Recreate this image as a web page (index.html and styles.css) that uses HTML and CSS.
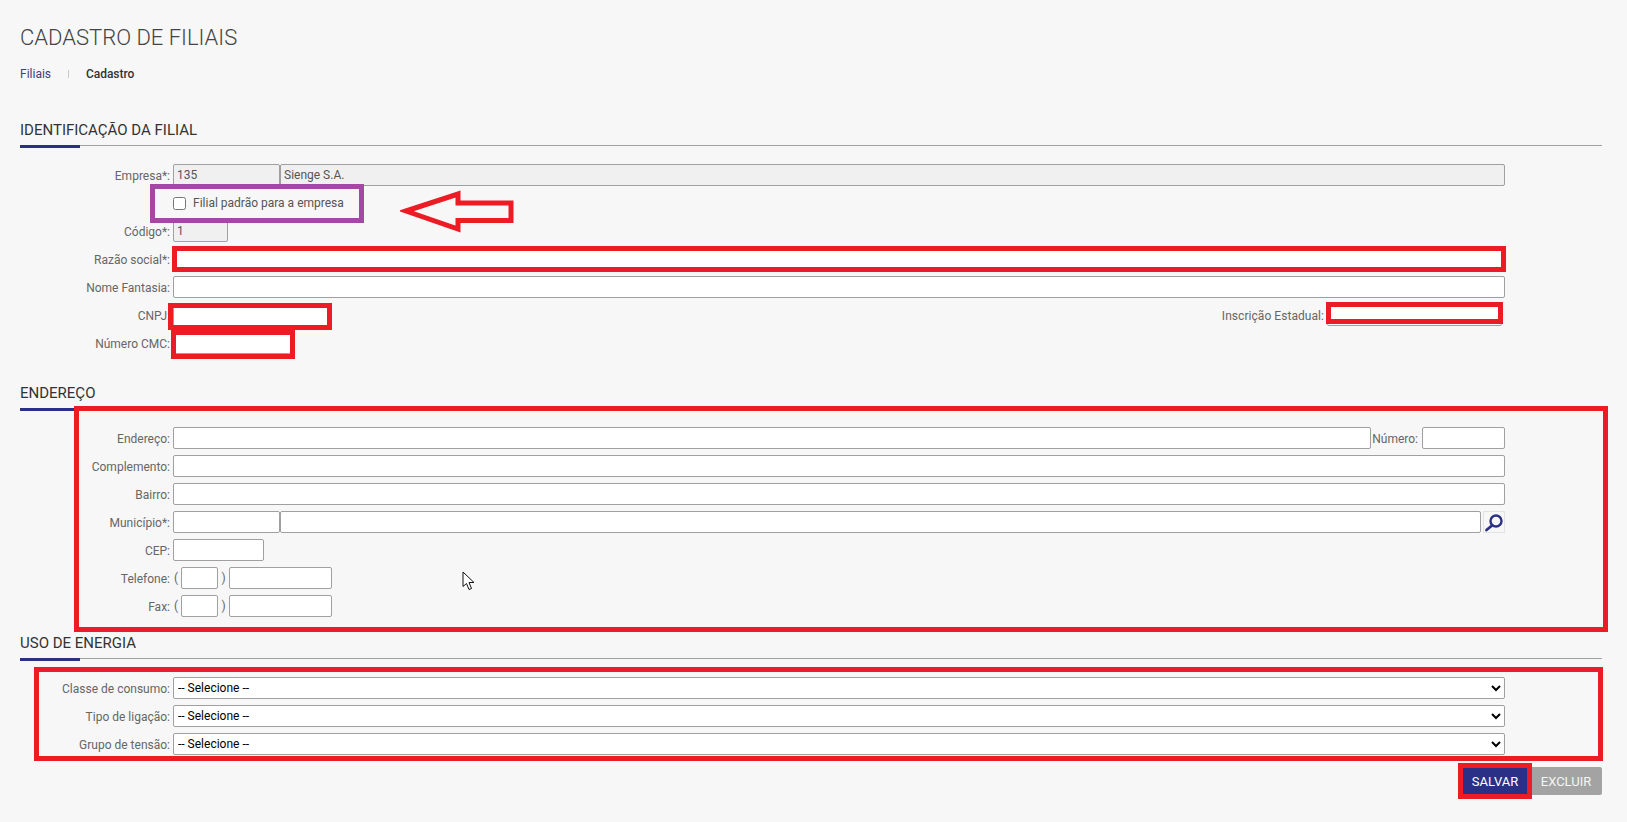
FILE: index.html
```html
<!DOCTYPE html>
<html lang="pt-BR">
<head>
    <meta charset="UTF-8">
    <title>Cadastro de Filiais</title>
    <link rel="stylesheet" href="styles.css">
</head>
<body>

    <div class="page">
        <h1>CADASTRO DE FILIAIS</h1>
        <div class="breadcrumb">
            <a class="crumb-link">Filiais</a>
            <span class="crumb-sep"></span>
            <span class="crumb-current">Cadastro</span>
        </div>

        <!-- Identificacao -->
        <h2 class="section-title first">IDENTIFICAÇÃO DA FILIAL</h2>
        <div class="rows">
            <div class="row">
                <label>Empresa*:</label>
                <input type="text" class="w-code locked" value="135" disabled>
                <input type="text" class="grow locked" value="Sienge S.A." disabled>
            </div>
            <div class="row">
                <label></label>
                <input type="checkbox" class="check">
                <span class="check-text">Filial padrão para a empresa</span>
            </div>
            <div class="row">
                <label>Código*:</label>
                <input type="text" class="w-short locked" value="1" disabled>
            </div>
            <div class="row">
                <label>Razão social*:</label>
                <input type="text" class="grow">
            </div>
            <div class="row">
                <label>Nome Fantasia:</label>
                <input type="text" class="grow">
            </div>
            <div class="row">
                <label>CNPJ:</label>
                <input type="text" class="w-cnpj">
                <span class="label-right">Inscrição Estadual:</span>
                <input type="text" class="w-ie">
            </div>
            <div class="row">
                <label>Número CMC:</label>
                <input type="text" class="w-cmc">
            </div>
        </div>

        <!-- Endereco -->
        <h2 class="section-title second">ENDEREÇO</h2>
        <div class="rows">
            <div class="row">
                <label>Endereço:</label>
                <input type="text" class="grow">
                <span class="label-num">Número:</span>
                <input type="text" class="w-num">
            </div>
            <div class="row">
                <label>Complemento:</label>
                <input type="text" class="grow">
            </div>
            <div class="row">
                <label>Bairro:</label>
                <input type="text" class="grow">
            </div>
            <div class="row">
                <label>Município*:</label>
                <input type="text" class="w-code">
                <input type="text" class="grow">
                <button class="search-btn" type="button">
                    <svg width="20" height="20" viewBox="0 0 20 20" xmlns="http://www.w3.org/2000/svg">
                        <circle cx="12" cy="9" r="5.5" fill="none" stroke="#2b3087" stroke-width="2.4" />
                        <path d="M8 13.5 L2.5 18" stroke="#2b3087" stroke-width="2.8" stroke-linecap="round" />
                    </svg>
                </button>
            </div>
            <div class="row">
                <label>CEP:</label>
                <input type="text" class="w-cep">
            </div>
            <div class="row">
                <label>Telefone:</label>
                <span class="paren-open">(</span>
                <input type="text" class="w-ddd">
                <span class="paren-close">)</span>
                <input type="text" class="w-phone">
            </div>
            <div class="row">
                <label>Fax:</label>
                <span class="paren-open">(</span>
                <input type="text" class="w-ddd">
                <span class="paren-close">)</span>
                <input type="text" class="w-phone">
            </div>
        </div>

        <!-- Uso de energia -->
        <h2 class="section-title third">USO DE ENERGIA</h2>
        <div class="rows">
            <div class="row">
                <label>Classe de consumo:</label>
                <select class="grow"><option>-- Selecione --</option></select>
            </div>
            <div class="row">
                <label>Tipo de ligação:</label>
                <select class="grow"><option>-- Selecione --</option></select>
            </div>
            <div class="row">
                <label>Grupo de tensão:</label>
                <select class="grow"><option>-- Selecione --</option></select>
            </div>
        </div>

        <div class="actions">
            <button class="btn btn-save" type="button">SALVAR</button>
            <button class="btn btn-delete" type="button">EXCLUIR</button>
        </div>
    </div>

    <!-- Marcacoes desenhadas por cima da tela -->
    <div class="mark purple-box"></div>
    <div class="mark red-razao"></div>
    <div class="mark red-cnpj"></div>
    <div class="mark red-ie"></div>
    <div class="mark red-cmc"></div>
    <div class="mark red-endereco"></div>
    <div class="mark red-energia"></div>
    <div class="mark red-salvar"></div>

    <svg class="arrow" width="122" height="48" viewBox="0 0 122 48" xmlns="http://www.w3.org/2000/svg">
        <path d="M6 22 L58 5 L58 14 L111 14 L111 31.5 L58 31.5 L58 40 Z" fill="none" stroke="#ed1c24" stroke-width="5" />
    </svg>

    <svg class="cursor" width="14" height="21" viewBox="0 0 14 21" xmlns="http://www.w3.org/2000/svg">
        <path d="M1 1 L1 15.5 L4.5 12.5 L7 18.5 L9.5 17.5 L7 11.5 L12 11.5 Z" fill="#fff" stroke="#111" stroke-width="1" />
    </svg>

</body>
</html>
```

FILE: styles.css
```css
body {
    margin: 0;
    padding: 0;
    background-color: #f7f7f7;
    font-family: Roboto, sans-serif;
    font-size: 12px;
    color: #666;
}

.page {
    padding: 24px 25px 0 20px;
}

h1 {
    margin: 0;
    font-size: 22px;
    line-height: 28px;
    font-weight: 300;
    color: #444;
}

.breadcrumb {
    display: flex;
    align-items: center;
    height: 16px;
    margin-top: 14px;
}

.crumb-link {
    color: #3d4080;
}

.crumb-sep {
    width: 1px;
    height: 8px;
    margin: 0 17px 0 17px;
    background-color: #ccc;
}

.crumb-current {
    color: #333;
    font-weight: 500;
    letter-spacing: -0.05px;
}

/* Titulos das secoes, com a linha e o trecho azul */
.section-title {
    position: relative;
    margin: 0 0 18px 0;
    height: 24px;
    line-height: 18px;
    font-size: 15px;
    font-weight: 400;
    color: #333;
    border-bottom: 1px solid #a0a0a0;
}

.section-title::after {
    content: "";
    position: absolute;
    left: 0;
    top: 24px;
    width: 60px;
    height: 3px;
    background-color: #2b3087;
}

.first {
    margin-top: 39px;
}

.second {
    margin-top: 30px;
}

.third {
    margin-top: 17px;
}

.rows {
    display: flex;
    flex-direction: column;
    gap: 6px;
    padding-right: 97px;
}

.row {
    display: flex;
    align-items: center;
    height: 22px;
}

label {
    width: 150px;
    margin-right: 3px;
    padding-top: 2px;
    text-align: right;
    flex-shrink: 0;
}

input[type="text"],
select {
    box-sizing: border-box;
    height: 22px;
    padding: 0 3px;
    font-family: Roboto, sans-serif;
    font-size: 12px;
    color: #000;
    background-color: #fff;
    border: 1px solid #a0a0a0;
    border-radius: 2px;
    outline: none;
}

select {
    padding: 0;
}

input[type="text"].locked {
    background-color: #f0f0f0;
    color: #555;
}

.grow {
    flex: 1;
    min-width: 0;
}

.w-code {
    width: 107px;
}

.w-short {
    width: 55px;
}

.w-cnpj {
    width: 156px;
}

.w-ie {
    width: 175px;
    margin-right: 3px;
}

.w-cmc {
    width: 118px;
}

.w-num {
    width: 83px;
}

.w-cep {
    width: 91px;
}

.w-ddd {
    width: 37px;
}

.w-phone {
    width: 103px;
}

.check {
    width: 13px;
    height: 13px;
    margin: 0 7px 0 0;
}

.check-text {
    color: #555;
}

.label-right {
    margin-left: auto;
    margin-right: 3px;
    padding-top: 2px;
    letter-spacing: 0.05px;
}

.label-num {
    margin: 0 4px 0 1px;
    padding-top: 2px;
}

.paren-open {
    width: 8px;
    padding-left: 1px;
    box-sizing: border-box;
}

.paren-close {
    width: 11px;
    text-align: center;
}

.search-btn {
    box-sizing: border-box;
    width: 22px;
    height: 22px;
    margin-left: 2px;
    padding: 0;
    background-color: #f7f7f7;
    border: 1px solid #e2e2e2;
    display: flex;
    align-items: center;
    justify-content: center;
}

.actions {
    display: flex;
    justify-content: flex-end;
    margin-top: 12px;
}

.btn {
    height: 28px;
    padding: 0;
    border: none;
    border-radius: 2px;
    font-family: Roboto, sans-serif;
    font-size: 13px;
    font-weight: 400;
    color: #fff;
}

.btn-save {
    width: 70px;
    background-color: #2b3087;
}

.btn-delete {
    width: 72px;
    background-color: #a3a3a3;
    color: #f5f5f5;
}

/* Retangulos de marcacao */
.mark {
    position: absolute;
    box-sizing: border-box;
    border: 5px solid #ed1c24;
}

.purple-box {
    left: 150px;
    top: 184px;
    width: 214px;
    height: 39px;
    border-color: #a349a4;
}

.red-razao {
    left: 172px;
    top: 246px;
    width: 1334px;
    height: 26px;
}

.red-cnpj {
    left: 168px;
    top: 303px;
    width: 164px;
    height: 27px;
}

.red-ie {
    left: 1326px;
    top: 302px;
    width: 177px;
    height: 22px;
}

.red-cmc {
    left: 171px;
    top: 330px;
    width: 124px;
    height: 29px;
}

.red-endereco {
    left: 74px;
    top: 406px;
    width: 1534px;
    height: 226px;
}

.red-energia {
    left: 34px;
    top: 667px;
    width: 1569px;
    height: 94px;
}

.red-salvar {
    left: 1458px;
    top: 763px;
    width: 74px;
    height: 36px;
}

.arrow {
    position: absolute;
    left: 400px;
    top: 189px;
}

.cursor {
    position: absolute;
    left: 462px;
    top: 571px;
}
```
